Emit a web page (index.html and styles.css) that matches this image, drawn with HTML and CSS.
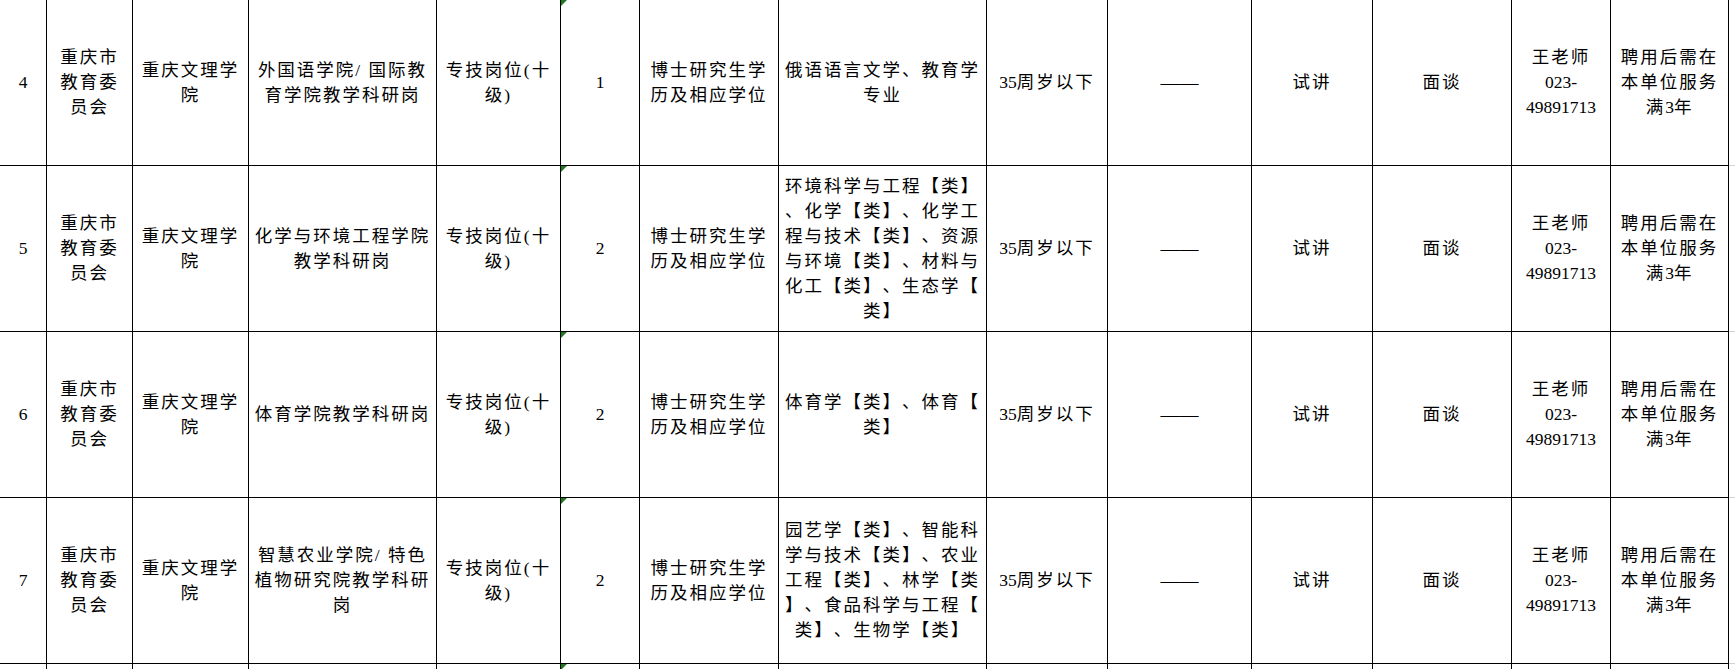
FILE: index.html
```html
<!DOCTYPE html>
<html lang="zh-CN">
<head>
<meta charset="utf-8">
<title>岗位表</title>
<link rel="stylesheet" href="styles.css">
</head>
<body>
<table class="sheet">
  <colgroup>
    <col class="w1"><col class="w2"><col class="w3"><col class="w4"><col class="w5"><col class="w6"><col class="w7"><col class="w8"><col class="w9"><col class="w10"><col class="w11"><col class="w12"><col class="w13"><col class="w14"><col class="wx">
  </colgroup>
  <tbody>
    <tr class="row">
      <td><span class="d">4</span></td>
      <td>重庆市<br>教育委<br>员会</td>
      <td>重庆文理学<br>院</td>
      <td>外国语学院/ 国际教<br>育学院教学科研岗</td>
      <td>专技岗位(十<br>级)</td>
      <td class="flag"><span class="d">1</span></td>
      <td>博士研究生学<br>历及相应学位</td>
      <td>俄语语言文学、教育学<br>专业</td>
      <td><span class="d">35</span>周岁以下</td>
      <td><span class="dash">——</span></td>
      <td>试讲</td>
      <td>面谈</td>
      <td>王老师<br><span class="d">023-</span><br><span class="d">49891713</span></td>
      <td>聘用后需在<br>本单位服务<br>满<span class="d">3</span>年</td>
      <td class="grid"></td>
    </tr>
    <tr class="row">
      <td><span class="d">5</span></td>
      <td>重庆市<br>教育委<br>员会</td>
      <td>重庆文理学<br>院</td>
      <td>化学与环境工程学院<br>教学科研岗</td>
      <td>专技岗位(十<br>级)</td>
      <td class="flag"><span class="d">2</span></td>
      <td>博士研究生学<br>历及相应学位</td>
      <td>环境科学与工程【类】<br>、化学【类】、化学工<br>程与技术【类】、资源<br>与环境【类】、材料与<br>化工【类】、生态学【<br>类】</td>
      <td><span class="d">35</span>周岁以下</td>
      <td><span class="dash">——</span></td>
      <td>试讲</td>
      <td>面谈</td>
      <td>王老师<br><span class="d">023-</span><br><span class="d">49891713</span></td>
      <td>聘用后需在<br>本单位服务<br>满<span class="d">3</span>年</td>
      <td class="grid"></td>
    </tr>
    <tr class="row">
      <td><span class="d">6</span></td>
      <td>重庆市<br>教育委<br>员会</td>
      <td>重庆文理学<br>院</td>
      <td>体育学院教学科研岗</td>
      <td>专技岗位(十<br>级)</td>
      <td class="flag"><span class="d">2</span></td>
      <td>博士研究生学<br>历及相应学位</td>
      <td>体育学【类】、体育【<br>类】</td>
      <td><span class="d">35</span>周岁以下</td>
      <td><span class="dash">——</span></td>
      <td>试讲</td>
      <td>面谈</td>
      <td>王老师<br><span class="d">023-</span><br><span class="d">49891713</span></td>
      <td>聘用后需在<br>本单位服务<br>满<span class="d">3</span>年</td>
      <td class="grid"></td>
    </tr>
    <tr class="row">
      <td><span class="d">7</span></td>
      <td>重庆市<br>教育委<br>员会</td>
      <td>重庆文理学<br>院</td>
      <td>智慧农业学院/ 特色<br>植物研究院教学科研<br>岗</td>
      <td>专技岗位(十<br>级)</td>
      <td class="flag"><span class="d">2</span></td>
      <td>博士研究生学<br>历及相应学位</td>
      <td>园艺学【类】、智能科<br>学与技术【类】、农业<br>工程【类】、林学【类<br>】、食品科学与工程【<br>类】、生物学【类】</td>
      <td><span class="d">35</span>周岁以下</td>
      <td><span class="dash">——</span></td>
      <td>试讲</td>
      <td>面谈</td>
      <td>王老师<br><span class="d">023-</span><br><span class="d">49891713</span></td>
      <td>聘用后需在<br>本单位服务<br>满<span class="d">3</span>年</td>
      <td class="grid"></td>
    </tr>
    <tr class="tail">
      <td></td><td></td><td></td><td></td><td></td><td class="flag"></td><td></td><td></td><td></td><td></td><td></td><td></td><td></td><td></td><td class="grid"></td>
    </tr>
  </tbody>
</table>
</body>
</html>
```

FILE: styles.css
```css
html, body {
  margin: 0;
  padding: 0;
  background: #ffffff;
  overflow: hidden;
}

.sheet {
  border-collapse: collapse;
  table-layout: fixed;
  width: 1778px;
  margin-top: -1px;
  margin-left: -1px;
  font-family: "Liberation Serif", "Noto Sans CJK SC", serif;
  font-size: 17.5px;
  line-height: 25px;
  color: #000;
  text-spacing-trim: space-all;
}

.w1 { width: 47px; }
.w2 { width: 86px; }
.w3 { width: 116px; }
.w4 { width: 188px; }
.w5 { width: 124px; }
.w6 { width: 79px; }
.w7 { width: 139px; }
.w8 { width: 208px; }
.w9 { width: 121px; }
.w10 { width: 144px; }
.w11 { width: 121px; }
.w12 { width: 139px; }
.w13 { width: 99px; }
.w14 { width: 118px; }
.wx { width: 49px; }

.sheet td {
  border: 1px solid #000;
  padding: 0;
  text-align: center;
  vertical-align: middle;
  white-space: nowrap;
  letter-spacing: 2px;
  overflow: hidden;
}

.row td { height: 165px; }
.tail td { height: 5px; }

.d { letter-spacing: 0; }

.dash {
  letter-spacing: 0;
  font-size: 19px;
}

.sheet td.grid {
  border-top: none;
  border-right: none;
  border-left: 1px solid #000;
  border-bottom: 1px solid #d4d4d4;
}

.flag { position: relative; }
.flag::before {
  content: "";
  position: absolute;
  top: 0;
  left: 0;
  border-style: solid;
  border-width: 6px 6px 0 0;
  border-color: #1f7a1f transparent transparent transparent;
}
```
